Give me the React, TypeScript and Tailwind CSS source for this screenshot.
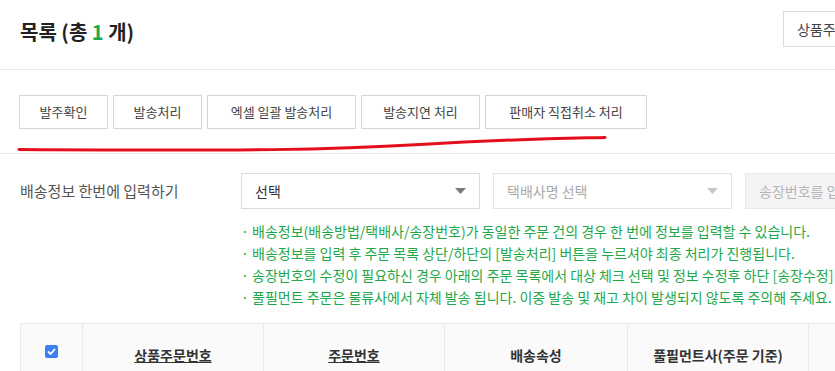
const ACTIONS = [
  { label: "발주확인", w: "w-[89px]" },
  { label: "발송처리", w: "w-[89px]" },
  { label: "엑셀 일괄 발송처리", w: "w-[149px]" },
  { label: "발송지연 처리", w: "w-[119px]" },
  { label: "판매자 직접취소 처리", w: "w-[162px]" },
];

const NOTES = [
  "배송정보(배송방법/택배사/송장번호)가 동일한 주문 건의 경우 한 번에 정보를 입력할 수 있습니다.",
  "배송정보를 입력 후 주문 목록 상단/하단의 [발송처리] 버튼을 누르셔야 최종 처리가 진행됩니다.",
  "송장번호의 수정이 필요하신 경우 아래의 주문 목록에서 대상 체크 선택 및 정보 수정후 하단 [송장수정] 버튼을 눌러주세요.",
  "풀필먼트 주문은 물류사에서 자체 발송 됩니다. 이중 발송 및 재고 차이 발생되지 않도록 주의해 주세요.",
];

const Caret = ({ light }: { light?: boolean }) => (
  <svg width="11" height="6" viewBox="0 0 11 6" className="shrink-0">
    <path d="M0 0 H11 L5.5 6 Z" fill={light ? "#c8c8c8" : "#7a7a7a"} />
  </svg>
);

const App = () => {
  return (
    <div className="relative w-[835px] h-[371px] overflow-hidden bg-white text-[#333] font-['Noto_Sans_CJK_KR','Noto_Sans',sans-serif]">
      <div className="w-[1100px]">
        {/* Header */}
        <div className="h-[70px] border-b border-[#e6e6e6] grid grid-cols-[783px_auto] items-start justify-items-start">
          <h2 className="pl-5 pt-[17px] text-[20px] font-bold text-[#222] leading-[30px]">
            목록 (총 <span className="text-[#1ea84a]">1</span> 개)
          </h2>
          <button className="mt-[11px] h-[36px] px-[13px] border border-[#dcdcdc] text-[14px] text-[#444] bg-white whitespace-nowrap">
            상품주문번호 엑셀 다운로드
          </button>
        </div>

        {/* Action buttons */}
        <div className="h-[84px] border-b border-[#e9e9e9] pl-[19px] pt-[25px] flex gap-[5px]">
          {ACTIONS.map((a) => (
            <button
              key={a.label}
              className={`${a.w} h-[34px] border border-[#d5d5d5] bg-white text-[13px] text-[#444]`}
            >
              {a.label}
            </button>
          ))}
        </div>

        {/* Bulk delivery input */}
        <div className="pt-[19px] flex">
          <div className="w-[241px] pl-5 h-[36px] flex items-center text-[15px] text-[#555] whitespace-nowrap">배송정보 한번에 입력하기</div>
          <div className="flex flex-col">
            <div className="flex gap-[13px]">
              <div className="w-[239px] h-[36px] border border-[#dcdcdc] px-[13px] flex items-center justify-between text-[14px] text-[#333]">
                <span>선택</span>
                <Caret />
              </div>
              <div className="w-[239px] h-[36px] border border-[#e4e4e4] px-[13px] flex items-center justify-between text-[14px] text-[#aaa]">
                <span>택배사명 선택</span>
                <Caret light />
              </div>
              <div className="w-[239px] h-[36px] border border-[#e8e8e8] bg-[#f4f4f6] px-[13px] flex items-center text-[14px] text-[#b5b5b5] whitespace-nowrap">
                송장번호를 입력해 주세요
              </div>
            </div>
            <ul className="mt-[11px] text-[14px] leading-[22px] text-[#1ea84a]">
              {NOTES.map((n) => (
                <li key={n} className="whitespace-nowrap">
                  · {n}
                </li>
              ))}
            </ul>
          </div>
        </div>

        {/* Table header */}
        <div className="mt-[15px] ml-5 border-t border-l border-[#e9e9e9] bg-[#fafafa] flex h-[60px] text-[14px] font-bold text-[#333]">
          <div className="w-[61px] flex items-center justify-center pb-1">
            <span className="w-[13px] h-[13px] rounded-[2px] bg-[#3b7ff3] flex items-center justify-center">
              <svg width="9" height="7" viewBox="0 0 9 7">
                <path d="M1 3.5 L3.5 6 L8 1" stroke="white" strokeWidth="1.8" fill="none" />
              </svg>
            </span>
          </div>
          <div className="w-[181px] border-l border-[#e9e9e9] flex items-center justify-center pt-1 underline">상품주문번호</div>
          <div className="w-[181px] border-l border-[#e9e9e9] flex items-center justify-center pt-1 underline">주문번호</div>
          <div className="w-[183px] border-l border-[#e9e9e9] flex items-center justify-center pt-1">배송속성</div>
          <div className="w-[181px] border-l border-[#e9e9e9] flex items-center justify-center pt-1">풀필먼트사(주문 기준)</div>
          <div className="w-[181px] border-l border-[#e9e9e9] flex items-center justify-center pt-1">배송방법</div>
        </div>
      </div>

      {/* Hand-drawn red annotation line */}
      <svg className="absolute left-0 top-0 pointer-events-none" width="835" height="371">
        <path
          d="M19 149.5 C 250 151, 330 150, 420 144.5 S 560 138.5, 605 137.5"
          stroke="#e3101b"
          strokeWidth="3"
          fill="none"
          strokeLinecap="round"
        />
      </svg>
    </div>
  );
};

export default App;
